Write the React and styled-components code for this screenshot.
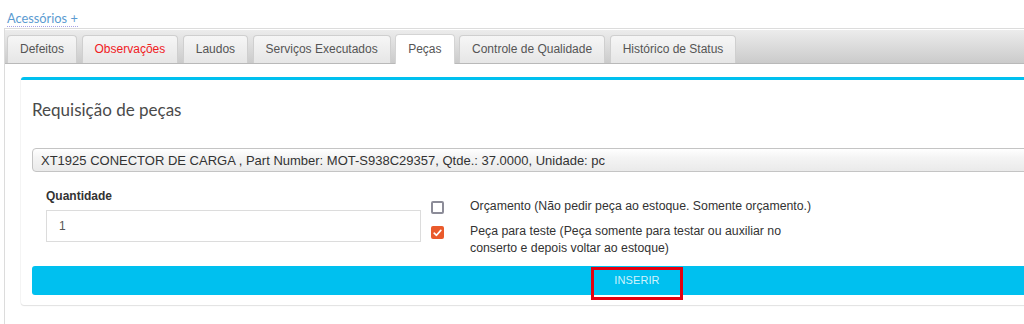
import React from "react";
import styled, { createGlobalStyle, css } from "styled-components";

const Global = createGlobalStyle`
  html, body { margin: 0; padding: 0; overflow: hidden; background: #fff; }
  body { font-family: "Liberation Sans", Arial, sans-serif; }
  #root { width: 1300px; }
`;

const Header = styled.div`
  height: 28px;
  padding-left: 7px;
  box-sizing: border-box;
`;

const AccLink = styled.a`
  display: inline-block;
  margin-top: 10px;
  font-family: Lato, "Open Sans", sans-serif;
  font-size: 12.8px;
  line-height: 16px;
  color: #5b9bd1;
  text-decoration: none;
  border-bottom: 1px dotted #a8a2e6;
`;

const Outer = styled.div`
  margin-left: 4px;
  border-top: 1px solid #dcdcdc;
  border-left: 1px solid #dcdcdc;
  padding-top: 1px;
  width: 1280px;
`;

const TabBar = styled.div`
  height: 34px;
  box-sizing: border-box;
  background: linear-gradient(#ececec, #cbcbcb);
  border-bottom: 1px solid #b9b9b9;
  display: flex;
  align-items: flex-end;
  gap: 4.5px;
  padding-left: 2px;
`;

const Tab = styled.div`
  height: 28px;
  box-sizing: border-box;
  padding: 0 12px;
  border: 1px solid #cfcfcf;
  border-bottom: none;
  border-radius: 4px 4px 0 0;
  background: linear-gradient(#f6f6f6, #e6e6e6);
  font-size: 12px;
  line-height: 27px;
  color: ${(p) => (p.$red ? "#f0201e" : "#555")};
  white-space: nowrap;
  ${(p) =>
    p.$active &&
    css`
      background: #fff;
      height: 30px;
      margin-bottom: -1px;
      line-height: 29px;
      border-color: #d4d4d4;
    `}
`;

const Body = styled.div`
  padding: 13px 0 19px 16px;
`;

const Card = styled.div`
  width: 1232px;
  box-sizing: border-box;
  background: #fff;
  border-top: 3px solid #00c0ef;
  border-radius: 3px;
  box-shadow: 0 1px 1px rgba(0, 0, 0, 0.12), -1px 0 0 rgba(0, 0, 0, 0.03);
  padding: 0 11px 10px;
`;

const Title = styled.h3`
  margin: 19px 0 0;
  font-family: Lato, "Open Sans", sans-serif;
  font-weight: 400;
  font-size: 17px;
  line-height: 22px;
  color: #4a4a4a;
`;

const Select = styled.div`
  margin-top: 27px;
  height: 24px;
  box-sizing: border-box;
  border: 1px solid #c4c4c4;
  border-radius: 4px;
  background: linear-gradient(#ffffff 0%, #f4f4f4 40%, #eaeaea 100%);
  padding-left: 8px;
  font-size: 13px;
  line-height: 23px;
  color: #333;
  white-space: nowrap;
`;

const Row = styled.div`
  display: flex;
  margin-top: 16px;
`;

const QtyCol = styled.div`
  padding-left: 14px;
  width: 375px;
`;

const Label = styled.div`
  font-weight: 700;
  font-size: 12px;
  line-height: 17px;
  color: #333;
  margin-bottom: 5px;
`;

const Input = styled.div`
  height: 32px;
  box-sizing: border-box;
  border: 1px solid #dcdcdc;
  padding-left: 12px;
  font-size: 12px;
  line-height: 31px;
  color: #555;
`;

const Checks = styled.div`
  margin-left: 10px;
  padding-top: 10px;
  display: flex;
  flex-direction: column;
  gap: 8px;
`;

const CheckItem = styled.div`
  display: flex;
  align-items: flex-start;
`;

const Box = styled.span`
  flex: none;
  width: 13px;
  height: 13px;
  box-sizing: border-box;
  margin-top: 3px;
  border-radius: 2px;
  display: flex;
  align-items: center;
  justify-content: center;
  ${(p) =>
    p.$checked
      ? css`
          background: #ea5a2b;
        `
      : css`
          border: 2px solid #8c8c98;
          background: #fff;
        `}
`;

const CheckText = styled.span`
  margin-left: 26px;
  width: 352px;
  font-size: 12.3px;
  line-height: 17px;
  color: #333;
`;

const ButtonWrap = styled.div`
  position: relative;
  margin-top: 9px;
`;

const Button = styled.div`
  height: 29px;
  border-radius: 3px;
  background: #00c0ef;
  color: rgba(255, 255, 255, 0.82);
  font-size: 11px;
  line-height: 29px;
  text-align: center;
  letter-spacing: 0.1px;
`;

const Highlight = styled.div`
  position: absolute;
  left: 559px;
  top: 1px;
  width: 92px;
  height: 33px;
  box-sizing: border-box;
  border: 3px solid #e3000f;
`;

const tabs = [
  { label: "Defeitos" },
  { label: "Observações", red: true },
  { label: "Laudos" },
  { label: "Serviços Executados" },
  { label: "Peças", active: true },
  { label: "Controle de Qualidade" },
  { label: "Histórico de Status" },
];

export default function App() {
  return (
    <>
      <Global />
      <Header>
        <AccLink>Acessórios +</AccLink>
      </Header>
      <Outer>
        <TabBar>
          {tabs.map((t) => (
            <Tab key={t.label} $active={t.active} $red={t.red}>
              {t.label}
            </Tab>
          ))}
        </TabBar>
        <Body>
          <Card>
            <Title>Requisição de peças</Title>
            <Select>
              XT1925 CONECTOR DE CARGA , Part Number: MOT-S938C29357, Qtde.: 37.0000, Unidade: pc
            </Select>
            <Row>
              <QtyCol>
                <Label>Quantidade</Label>
                <Input>1</Input>
              </QtyCol>
              <Checks>
                <CheckItem>
                  <Box />
                  <CheckText>Orçamento (Não pedir peça ao estoque. Somente orçamento.)</CheckText>
                </CheckItem>
                <CheckItem>
                  <Box $checked>
                    <svg width="9" height="8" viewBox="0 0 9 8">
                      <path d="M1.2 4.2 L3.5 6.3 L7.8 1.4" fill="none" stroke="#fff" strokeWidth="1.7" strokeLinecap="round" strokeLinejoin="round" />
                    </svg>
                  </Box>
                  <CheckText>
                    Peça para teste (Peça somente para testar ou auxiliar no conserto e depois voltar ao estoque)
                  </CheckText>
                </CheckItem>
              </Checks>
            </Row>
            <ButtonWrap>
              <Button>INSERIR</Button>
              <Highlight />
            </ButtonWrap>
          </Card>
        </Body>
      </Outer>
    </>
  );
}
